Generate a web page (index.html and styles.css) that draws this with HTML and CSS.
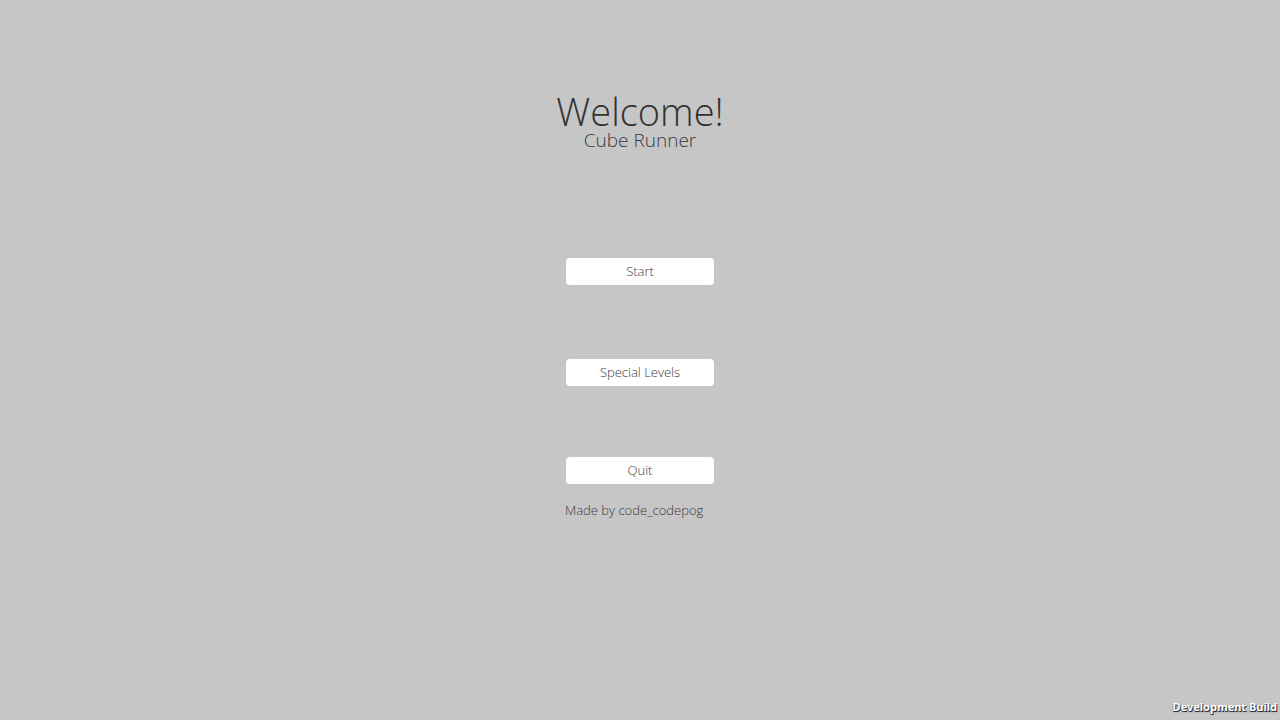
FILE: index.html
```html
<!DOCTYPE html>
<html>
<head>
<meta charset="utf-8">
<link rel="stylesheet" href="styles.css">
</head>
<body>
<main class="screen">
  <header class="title-block">
    <h1 class="title">Welcome!</h1>
    <h2 class="subtitle">Cube Runner</h2>
  </header>
  <nav class="menu">
    <button class="btn btn-start">Start</button>
    <button class="btn btn-special">Special Levels</button>
    <button class="btn btn-quit">Quit</button>
    <p class="credit">Made by code_codepog</p>
  </nav>
  <div class="dev-build">Development Build</div>
</main>
</body>
</html>
```

FILE: styles.css
```css
* { box-sizing: border-box; }
html, body {
  margin: 0;
  padding: 0;
  width: 1280px;
  height: 720px;
  overflow: hidden;
  background: #c6c6c6;
  font-family: "Open Sans", "Noto Sans", sans-serif;
}
.screen {
  position: relative;
  width: 1280px;
  height: 720px;
  display: flex;
  flex-direction: column;
  align-items: center;
}
.title-block {
  margin-top: 92px;
  display: flex;
  flex-direction: column;
  align-items: center;
}
.title {
  margin: 0;
  font-weight: 300;
  font-size: 38px;
  line-height: 38px;
  color: #323232;
}
.subtitle {
  margin: 0;
  font-weight: 300;
  font-size: 19px;
  line-height: 20px;
  color: #3a3a3a;
}
.menu {
  margin-top: 108px;
  width: 148px;
  display: flex;
  flex-direction: column;
  align-items: stretch;
}
.btn {
  width: 148px;
  height: 27px;
  margin: 0;
  border: none;
  border-radius: 4px;
  background: #ffffff;
  font-family: "Open Sans", "Noto Sans", sans-serif;
  font-weight: 300;
  font-size: 13px;
  line-height: 27px;
  color: #3a3a3a;
  padding: 0;
}
.btn-special { margin-top: 74px; }
.btn-quit { margin-top: 71px; }
.credit {
  margin: 0;
  margin-top: 17px;
  margin-left: -1px;
  font-weight: 300;
  font-size: 13px;
  line-height: 18px;
  color: #3a3a3a;
  white-space: nowrap;
}
.dev-build {
  position: absolute;
  right: 3px;
  bottom: 6px;
  font-family: "Noto Sans", "DejaVu Sans", sans-serif;
  font-weight: bold;
  font-size: 11px;
  line-height: 14px;
  letter-spacing: 0;
  color: #ffffff;
  text-shadow: 1px 1px 0 #333, 0 1px 1px #333;
}
```
